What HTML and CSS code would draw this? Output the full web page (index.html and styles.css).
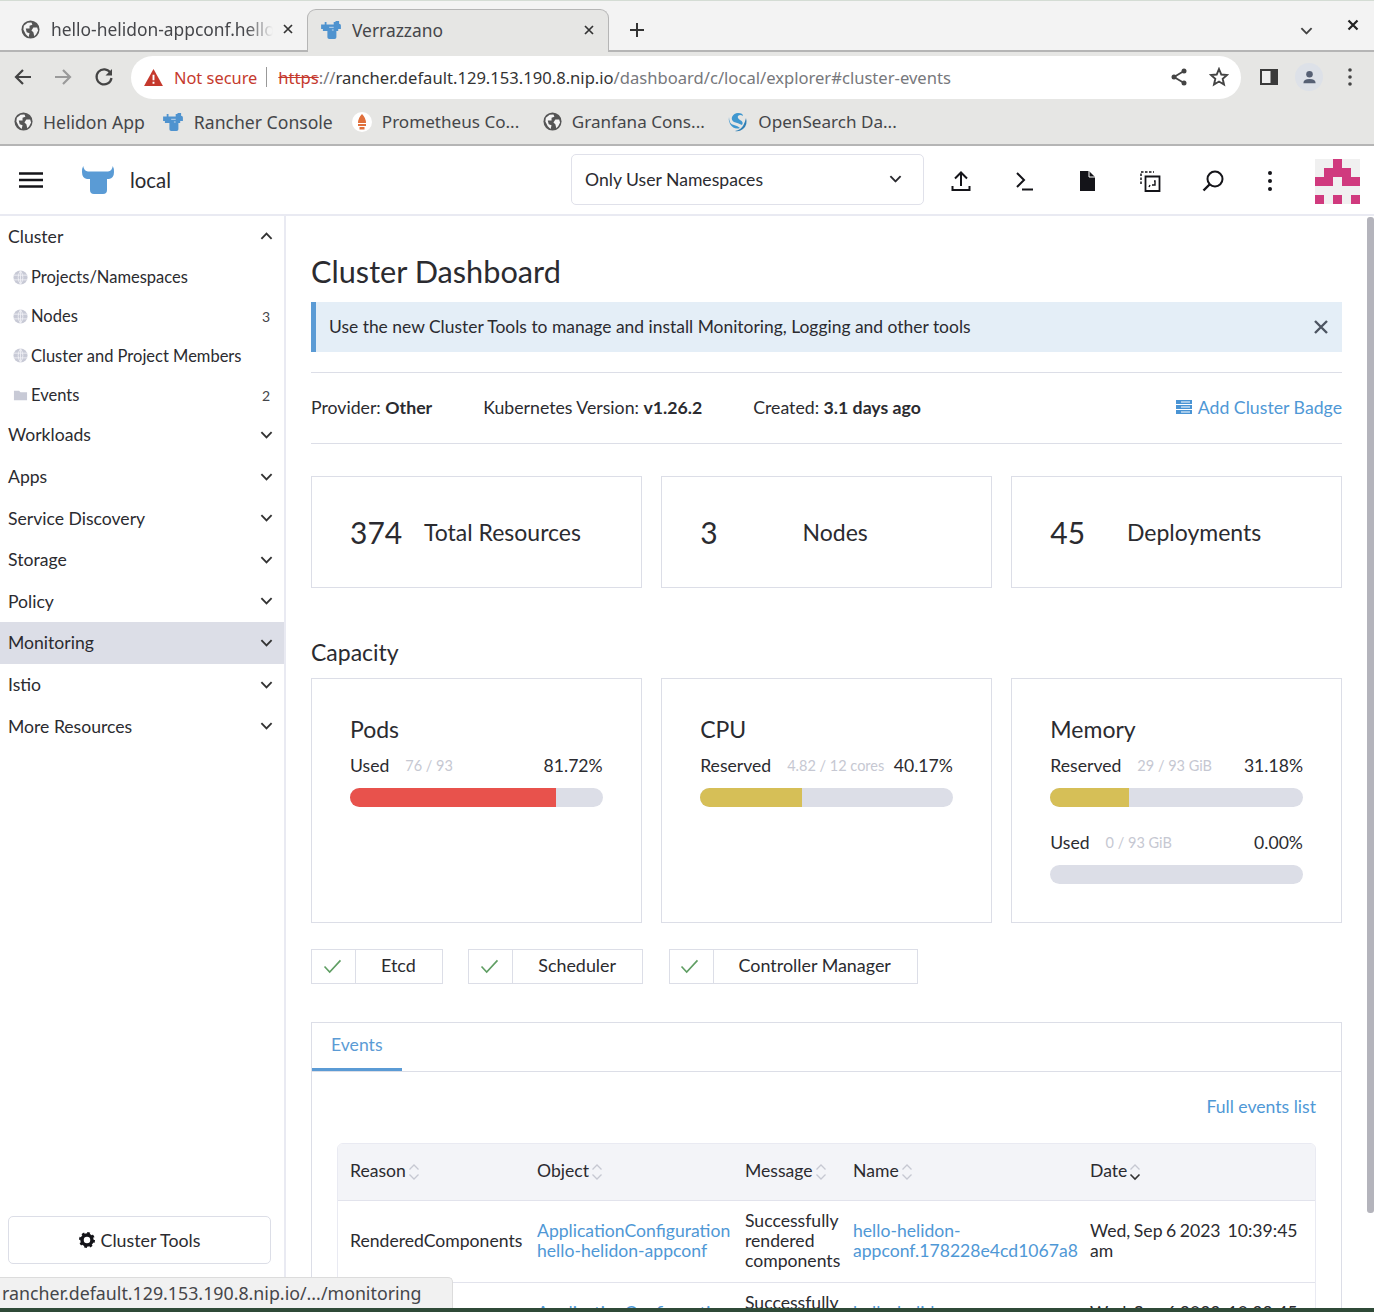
FILE: index.html
```html
<!DOCTYPE html>
<html lang="en">
<head>
  <meta charset="UTF-8" />
  <title>Verrazzano</title>
  <link rel="stylesheet" href="styles.css">
</head>
<body>
  <svg class="defs" width="0" height="0">
    <symbol id="bull" viewBox="0 0 32 28">
      <path d="M0 6 Q0 2 1.200 0 Q2 5 6 5.500 H26 Q30 5 30.800 0 Q32 2 32 6 Q32 12 27 13 H25 V24 Q25 28 21 28 H12 Q8 28 8 24 V13 H5 Q0 12 0 6Z" fill="#5a9bd5"/>
    </symbol>
    <symbol id="bull-small" viewBox="0 0 22 20">
      <path d="M0 4 H4 V1 H6 V4 H14 V1 H16 V0 H20 V3 Q22 3 22 5 V9 H19 V11 H17 V18 Q17 20 15 20 H9 Q7 20 7 18 V11 H2 V9 H0Z" fill="#4f93cf"/>
      <path d="M9 7 H14 M12 10 H14" stroke="#cfe0ef" stroke-width="1"/>
    </symbol>
    <symbol id="earth" viewBox="0 0 20 20">
      <circle cx="10" cy="10" r="9.500" fill="#555"/>
      <path d="M3 6 L7 3 L11 2.500 L12 5 L9 6 L9 9 L5 9 L6 13 L9 14 L8 18 L5 15 L2.500 10Z M13 8 H17 L18 11 L16 15 L14 17 L13 13 L11 11Z" fill="#f4f4f4"/>
    </symbol>
    <symbol id="small-globe" viewBox="0 0 16 16">
      <circle cx="8" cy="8" r="7.500" fill="#c8cad6"/>
      <path d="M0.500 5.500 H15.500 M0.500 10.500 H15.500 M8 0.500 V15.500 M8 0.500 Q3 8 8 15.500 M8 0.500 Q13 8 8 15.500" fill="none" stroke="#f1f1f6" stroke-width="0.900"/>
    </symbol>
    <symbol id="chev-down" viewBox="0 0 14 8">
      <path d="M1.500 1 L7 6.500 L12.500 1" fill="none" stroke="currentColor" stroke-width="2"/>
    </symbol>
    <symbol id="sort" viewBox="0 0 12 18">
      <path d="M1.500 6.500 L6 2 L10.500 6.500 M1.500 11.500 L6 16 L10.500 11.500" fill="none" stroke="#c6c8d2" stroke-width="1.300"/>
    </symbol>
    <symbol id="check" viewBox="0 0 20 16">
      <path d="M1.500 8 L7 14 L18.500 1.500" fill="none" stroke="#5f9e63" stroke-width="1.700"/>
    </symbol>
  </svg>

  <div class="tabstrip">
    <div class="tab">
      <svg class="tab-icon"><use href="#earth"/></svg>
      <span class="tab-title">hello-helidon-appconf.hello-helidon</span>
      <svg class="tab-close" viewBox="0 0 10 10"><path d="M1 1 L9 9 M9 1 L1 9" stroke="#333" stroke-width="1.700"/></svg>
    </div>
    <div class="tab tab-active">
      <svg class="tab-icon"><use href="#bull-small"/></svg>
      <span class="tab-title">Verrazzano</span>
      <svg class="tab-close" viewBox="0 0 10 10"><path d="M1 1 L9 9 M9 1 L1 9" stroke="#333" stroke-width="1.700"/></svg>
    </div>
    <svg class="new-tab" viewBox="0 0 16 16"><path d="M8 1 V15 M1 8 H15" stroke="#333" stroke-width="2"/></svg>
    <svg class="tab-list" viewBox="0 0 14 8"><use href="#chev-down"/></svg>
    <svg class="win-close" viewBox="0 0 12 12"><path d="M1.500 1.500 L10.500 10.500 M10.500 1.500 L1.500 10.500" stroke="#222" stroke-width="2.200"/></svg>
  </div>

  <div class="toolbar">
    <svg class="nav-icon nav-back" viewBox="0 0 20 20"><path d="M18 10 H3 M10 3 L3 10 L10 17" fill="none" stroke="#444" stroke-width="2.200"/></svg>
    <svg class="nav-icon nav-fwd" viewBox="0 0 20 20"><path d="M2 10 H17 M10 3 L17 10 L10 17" fill="none" stroke="#9a9a9a" stroke-width="2.200"/></svg>
    <svg class="nav-icon nav-reload" viewBox="0 0 20 20"><path d="M16.500 6 A7.500 7.500 0 1 0 17.500 11" fill="none" stroke="#444" stroke-width="2.200"/><path d="M18 2 V8.500 H11.500Z" fill="#444"/></svg>
    <div class="omnibox">
      <svg class="warn" viewBox="0 0 20 18"><path d="M10 0 L20 18 H0Z" fill="#c5392d"/><path d="M10 6 V12 M10 13.500 V15.500" stroke="#fff" stroke-width="2"/></svg>
      <span class="not-secure">Not secure</span>
      <span class="omni-sep"></span>
      <span class="url"><span class="url-https">https</span><span class="url-dim">://</span>rancher.default.129.153.190.8.nip.io<span class="url-dim">/dashboard/c/local/explorer#cluster-events</span></span>
      <svg class="omni-icon omni-share" viewBox="0 0 18 20"><path d="M14 4 L4 10 L14 16" fill="none" stroke="#444" stroke-width="1.800"/><circle cx="14" cy="4" r="2.500" fill="#444"/><circle cx="4" cy="10" r="2.500" fill="#444"/><circle cx="14" cy="16" r="2.500" fill="#444"/></svg>
      <svg class="omni-icon" viewBox="0 0 20 20"><path d="M10 2 L12.300 7.500 L18 8 L13.700 11.800 L15 17.500 L10 14.500 L5 17.500 L6.300 11.800 L2 8 L7.700 7.500Z" fill="none" stroke="#444" stroke-width="1.900"/></svg>
    </div>
    <svg class="side-panel" viewBox="0 0 18 16"><path d="M0 0 H18 V16 H0Z" fill="#3a3a3a"/><path d="M2 2 H10.500 V14 H2Z" fill="#eee"/></svg>
    <div class="profile">
      <svg viewBox="0 0 16 16"><circle cx="8" cy="4.500" r="3.500" fill="#566074"/><path d="M1.500 14 Q1.500 9.500 8 9.500 Q14.500 9.500 14.500 14Z" fill="#566074"/></svg>
    </div>
    <svg class="kebab-chrome" viewBox="0 0 4 18"><circle cx="2" cy="2" r="1.800" fill="#444"/><circle cx="2" cy="9" r="1.800" fill="#444"/><circle cx="2" cy="16" r="1.800" fill="#444"/></svg>
  </div>

  <div class="bookmarks">
    <span class="bookmark"><svg><use href="#earth"/></svg>Helidon App</span>
    <span class="bookmark"><svg class="bm-bull"><use href="#bull-small"/></svg>Rancher Console</span>
    <span class="bookmark bookmark-cut"><svg class="bm-wide" viewBox="0 0 20 20"><circle cx="10" cy="10" r="10" fill="#fff"/><path d="M10 2 Q14 6 14 11 H6 Q6 6 10 2Z M6 12 H14 V14 H6Z M7.500 15 H12.500 V17.500 H7.500Z" fill="#e0703c"/></svg>Prometheus Co...</span>
    <span class="bookmark bookmark-cut"><svg><use href="#earth"/></svg>Granfana Cons...</span>
    <span class="bookmark bookmark-cut"><svg class="bm-wide" viewBox="0 0 20 20"><path d="M10 1 Q15 1 15 4 Q12 2 10 4 Q9 6 12 8 Q16 10 14 13 Q10 11 6 10 Q3 8 4 5 Q6 1 10 1Z M1 5 Q1 12 6 13 Q10 14 12 16 Q6 18 2 12 Q0 8 1 5Z" fill="#3f97cf"/><path d="M18 6 Q20 13 15 17 Q11 20 7 19 Q13 18 15.500 13 Q17 10 18 6Z" fill="#2f7fb5"/></svg>OpenSearch Da...</span>
  </div>

  <header class="app-header">
    <svg class="burger" viewBox="0 0 24 16"><path d="M0 1.500 H24 M0 8 H24 M0 14.500 H24" stroke="#141419" stroke-width="2.400"/></svg>
    <svg class="app-logo"><use href="#bull"/></svg>
    <span class="cluster-name">local</span>
    <div class="ns-select">
      <span>Only User Namespaces</span>
      <svg viewBox="0 0 14 8"><use href="#chev-down"/></svg>
    </div>
    <div class="head-icon"><svg viewBox="0 0 20 22"><path d="M10 16 V3 M4 8.500 L10 2.500 L16 8.500 M1.500 16 V20 H18.500 V16" fill="none" stroke="#141419" stroke-width="2"/></svg></div>
    <div class="head-icon"><svg viewBox="0 0 20 22"><path d="M3 3 L10 10 L3 17 M8 19.500 H19" fill="none" stroke="#141419" stroke-width="2"/></svg></div>
    <div class="head-icon"><svg viewBox="0 0 20 22"><path d="M3 1 H12 L18 7 V21 H3Z" fill="#141419"/><path d="M12 1 V7 H18" fill="none" stroke="#fff" stroke-width="1"/></svg></div>
    <div class="head-icon"><svg viewBox="0 0 22 22"><path d="M2 14 V2 H15" fill="none" stroke="#141419" stroke-width="1.500" stroke-dasharray="2.500 1.500"/><path d="M6.500 6.500 H20.500 V21 H6.500Z" fill="none" stroke="#141419" stroke-width="1.800"/><path d="M11 15 L10 17 M15 11 H16 V15 H13" fill="none" stroke="#141419" stroke-width="1.400"/></svg></div>
    <div class="head-icon"><svg viewBox="0 0 22 22"><circle cx="13" cy="9" r="7.500" fill="none" stroke="#141419" stroke-width="2"/><path d="M7.500 14.500 L1.500 20.500" stroke="#141419" stroke-width="2.400"/></svg></div>
    <div class="head-icon head-kebab"><svg viewBox="0 0 4 22"><circle cx="2" cy="3" r="2" fill="#141419"/><circle cx="2" cy="11" r="2" fill="#141419"/><circle cx="2" cy="19" r="2" fill="#141419"/></svg></div>
    <svg class="avatar" viewBox="0 0 45 45">
      <rect width="45" height="45" fill="#f0f0f0"/>
      <path d="M18 0 H27 V9 H36 V18 H45 V27 H27 V18 H18 V27 H0 V18 H9 V9 H18Z M0 36 H9 V45 H0Z M18 36 H27 V45 H18Z M36 36 H45 V45 H36Z" fill="#d03a7e"/>
    </svg>
  </header>

  <div class="app-body">
    <nav class="sidebar">
      <div class="group group-first">Cluster<svg class="chev chev-up"><use href="#chev-down"/></svg></div>
      <a class="child"><svg><use href="#small-globe"/></svg>Projects/Namespaces</a>
      <a class="child"><svg><use href="#small-globe"/></svg>Nodes<span class="child-count">3</span></a>
      <a class="child"><svg><use href="#small-globe"/></svg>Cluster and Project Members</a>
      <a class="child"><svg viewBox="0 0 16 16"><path d="M1 3 H6.500 L8 4.500 H15 V13 H1Z" fill="#c8cad6"/></svg>Events<span class="child-count">2</span></a>
      <div class="group">Workloads<svg class="chev"><use href="#chev-down"/></svg></div>
      <div class="group">Apps<svg class="chev"><use href="#chev-down"/></svg></div>
      <div class="group">Service Discovery<svg class="chev"><use href="#chev-down"/></svg></div>
      <div class="group">Storage<svg class="chev"><use href="#chev-down"/></svg></div>
      <div class="group">Policy<svg class="chev"><use href="#chev-down"/></svg></div>
      <div class="group group-hover">Monitoring<svg class="chev"><use href="#chev-down"/></svg></div>
      <div class="group">Istio<svg class="chev"><use href="#chev-down"/></svg></div>
      <div class="group">More Resources<svg class="chev"><use href="#chev-down"/></svg></div>
      <button class="tools-btn">
        <svg viewBox="0 0 16 16"><circle cx="8" cy="8" r="5" fill="none" stroke="#141419" stroke-width="3.500"/><circle cx="8" cy="8" r="6.700" fill="none" stroke="#141419" stroke-width="2.600" stroke-dasharray="2.600 2.660"/></svg>
        Cluster Tools
      </button>
    </nav>

    <main class="main">
      <h1 class="page-title">Cluster Dashboard</h1>
      <div class="banner">
        <span>Use the new Cluster Tools to manage and install Monitoring, Logging and other tools</span>
        <svg viewBox="0 0 16 16"><path d="M2 2 L14 14 M14 2 L2 14" stroke="#4d5562" stroke-width="2.400"/></svg>
      </div>
      <div class="info-row">
        <span>Provider: <b>Other</b></span>
        <span>Kubernetes Version: <b>v1.26.2</b></span>
        <span>Created: <b>3.1 days ago</b></span>
        <a class="badge-link">
          <svg viewBox="0 0 16 16"><path d="M0 1 H16 V15 H0Z" fill="#4a94d4"/><path d="M0 5.500 H16 M0 10.500 H16 M5 3 H14 M5 8 H14 M5 13 H14" stroke="#fff" stroke-width="1"/></svg>
          Add Cluster Badge
        </a>
      </div>

      <div class="count-grid">
        <div class="count-card"><span class="count-num">374</span><span class="count-label">Total Resources</span></div>
        <div class="count-card"><span class="count-num">3</span><span class="count-label">Nodes</span></div>
        <div class="count-card"><span class="count-num">45</span><span class="count-label">Deployments</span></div>
      </div>

      <h2 class="section-title">Capacity</h2>
      <div class="capacity-grid">
        <div class="cap-card">
          <h3>Pods</h3>
          <div class="cap-line"><span>Used</span><span class="cap-amount">76 / 93</span><span class="cap-pct">81.72%</span></div>
          <div class="bar"><div class="bar-fill bar-red" style="width: 81.72%"></div></div>
        </div>
        <div class="cap-card">
          <h3>CPU</h3>
          <div class="cap-line"><span>Reserved</span><span class="cap-amount">4.82 / 12 cores</span><span class="cap-pct">40.17%</span></div>
          <div class="bar"><div class="bar-fill bar-yellow" style="width: 40.17%"></div></div>
        </div>
        <div class="cap-card">
          <h3>Memory</h3>
          <div class="cap-line"><span>Reserved</span><span class="cap-amount">29 / 93 GiB</span><span class="cap-pct">31.18%</span></div>
          <div class="bar"><div class="bar-fill bar-yellow" style="width: 31.18%"></div></div>
          <div class="cap-line cap-line-second"><span>Used</span><span class="cap-amount">0 / 93 GiB</span><span class="cap-pct">0.00%</span></div>
          <div class="bar"></div>
        </div>
      </div>

      <div class="status-row">
        <div class="status"><span class="status-check"><svg><use href="#check"/></svg></span><span class="status-label">Etcd</span></div>
        <div class="status"><span class="status-check"><svg><use href="#check"/></svg></span><span class="status-label">Scheduler</span></div>
        <div class="status"><span class="status-check"><svg><use href="#check"/></svg></span><span class="status-label">Controller Manager</span></div>
      </div>

      <section class="tabs-box">
        <div class="tabs-head"><span class="tabs-item">Events</span></div>
        <div class="tabs-body">
          <div class="full-list"><a>Full events list</a></div>
          <table class="events">
            <thead>
              <tr>
                <th class="col-reason">Reason<svg class="sort"><use href="#sort"/></svg></th>
                <th class="col-object">Object<svg class="sort"><use href="#sort"/></svg></th>
                <th class="col-message">Message<svg class="sort"><use href="#sort"/></svg></th>
                <th class="col-name">Name<svg class="sort"><use href="#sort"/></svg></th>
                <th class="col-date">Date<svg class="sort" viewBox="0 0 12 18"><path d="M1.500 6.500 L6 2 L10.500 6.500" fill="none" stroke="#c6c8d2" stroke-width="1.300"/><path d="M1.500 11.500 L6 16 L10.500 11.500" fill="none" stroke="#333" stroke-width="1.600"/></svg></th>
              </tr>
            </thead>
            <tbody>
              <tr>
                <td>RenderedComponents</td>
                <td><a>ApplicationConfiguration hello-helidon-appconf</a></td>
                <td>Successfully rendered components</td>
                <td><a>hello-helidon-appconf.178228e4cd1067a8</a></td>
                <td class="cell-date">Wed, Sep 6 2023&nbsp; 10:39:45 am</td>
              </tr>
              <tr>
                <td>RenderedComponents</td>
                <td><a>ApplicationConfiguration hello-helidon-appconf</a></td>
                <td>Successfully rendered components</td>
                <td><a>hello-helidon-appconf.178228e4cd1067a8</a></td>
                <td class="cell-date">Wed, Sep 6 2023&nbsp; 10:39:45 am</td>
              </tr>
            </tbody>
          </table>
        </div>
      </section>
    </main>

    <div class="scrollbar"><div class="scroll-thumb"></div></div>
  </div>

  <div class="status-bubble">rancher.default.129.153.190.8.nip.io/.../monitoring</div>
  <div class="desktop-strip"></div>
</body>
</html>
```

FILE: styles.css
```css
html, body {
  height: 100%;
}

body {
  margin: 0;
  width: 1374px;
  height: 1312px;
  overflow: hidden;
  display: flex;
  flex-direction: column;
  position: relative;
  font-family: Lato, "Liberation Sans", sans-serif;
  font-size: 17.600px;
  color: #2b2b30;
  background-color: #fff;
}

.defs {
  position: absolute;
}

a {
  color: #4f98d6;
}

/* browser chrome */
.tabstrip {
  height: 52px;
  flex: none;
  box-sizing: border-box;
  display: flex;
  align-items: flex-end;
  background-color: #f3f3f3;
  border-top: 1px solid #d4dcd4;
  border-bottom: 2px solid #b5b5b5;
  font-family: "Noto Sans", sans-serif;
  font-size: 17.400px;
  color: #45464a;
  position: relative;
}

.tab {
  width: 307px;
  height: 40px;
  box-sizing: border-box;
  display: flex;
  align-items: center;
  padding: 0 14px 2px 21px;
}

.tab-active {
  width: 302px;
  height: 43px;
  margin-bottom: -2px;
  padding: 0 14px 3px 13px;
  background-color: #e6e6e4;
  border: 1px solid #b5b5b5;
  border-bottom: none;
  border-radius: 9px 9px 0 0;
}

.tab-icon {
  width: 19px;
  height: 19px;
  flex: none;
  margin-right: 11px;
}

.tab-active .tab-icon {
  width: 20px;
  height: 18px;
  margin-right: 11px;
}

.tab-title {
  flex: 1;
  min-width: 0;
  white-space: nowrap;
  overflow: hidden;
}

.tab .tab-title {
  -webkit-mask-image: linear-gradient(to right, #000 88%, transparent 100%);
  mask-image: linear-gradient(to right, #000 88%, transparent 100%);
}

.tab-active .tab-title {
  -webkit-mask-image: none;
  mask-image: none;
}

.tab-close {
  width: 10px;
  height: 10px;
  flex: none;
  margin-left: 10px;
}

.new-tab {
  width: 16px;
  height: 16px;
  margin: 0 0 12px 20px;
}

.tab-list {
  width: 13px;
  height: 8px;
  margin: 0 0 15px auto;
  color: #444;
}

.win-close {
  width: 12px;
  height: 12px;
  margin: 0 15px 19px 34px;
}

.toolbar {
  height: 50px;
  flex: none;
  display: flex;
  align-items: center;
  background-color: #e6e6e4;
}

.nav-icon {
  width: 20px;
  height: 20px;
  flex: none;
}

.nav-back {
  margin-left: 13px;
}

.nav-fwd {
  margin-left: 20px;
}

.nav-reload {
  margin-left: 21px;
}

.omnibox {
  width: 1110px;
  height: 43px;
  flex: none;
  margin-left: 17px;
  box-sizing: border-box;
  display: flex;
  align-items: center;
  padding: 0 12px 0 13px;
  background-color: #fff;
  border-radius: 22px;
  font-family: "Noto Sans", sans-serif;
  font-size: 16.600px;
  color: #333;
}

.warn {
  width: 19px;
  height: 17px;
  flex: none;
}

.not-secure {
  margin-left: 11px;
  font-size: 16.400px;
  color: #c5392d;
}

.omni-sep {
  width: 1px;
  height: 20px;
  margin: 0 11px 0 9px;
  background-color: #999;
}

.url {
  flex: 1;
  white-space: nowrap;
}

.url-https {
  color: #c5392d;
  text-decoration: line-through;
}

.url-dim {
  color: #77787c;
}

.omni-icon {
  width: 20px;
  height: 20px;
  flex: none;
  margin-left: 20px;
}

.side-panel {
  width: 18px;
  height: 16px;
  flex: none;
  margin-left: 19px;
}

.profile {
  width: 28px;
  height: 28px;
  flex: none;
  margin-left: 17px;
  display: flex;
  align-items: center;
  justify-content: center;
  background-color: #dde1e8;
  border-radius: 50%;
}

.profile svg {
  width: 15px;
  height: 15px;
}

.kebab-chrome {
  width: 4px;
  height: 18px;
  flex: none;
  margin-left: 25px;
}

.bookmarks {
  height: 44px;
  flex: none;
  box-sizing: border-box;
  display: flex;
  align-items: center;
  gap: 19px;
  padding: 0 0 3px 14px;
  background-color: #e6e6e4;
  border-bottom: 2px solid #b5b5b5;
  font-family: "Noto Sans", sans-serif;
  font-size: 17.600px;
  color: #45464a;
}

.bookmark {
  display: flex;
  align-items: center;
  gap: 10px;
  white-space: nowrap;
}

.bookmark-cut {
  padding-right: 4.500px;
  font-size: 17.100px;
}

.bookmark svg {
  width: 19px;
  height: 19px;
  flex: none;
}

.bookmark .bm-bull {
  width: 22px;
  height: 18px;
  margin-left: -2px;
}

.bookmark .bm-wide {
  width: 20px;
  height: 20px;
}

/* app header */
.app-header {
  height: 70px;
  flex: none;
  box-sizing: border-box;
  display: flex;
  align-items: center;
  padding-left: 19px;
  background-color: #fff;
  border-bottom: 2px solid #e9eaf2;
}

.burger {
  width: 24px;
  height: 16px;
  flex: none;
}

.app-logo {
  width: 32px;
  height: 28px;
  flex: none;
  margin-left: 39px;
}

.cluster-name {
  width: 100px;
  margin-left: 16px;
  font-size: 20.400px;
}

.ns-select {
  width: 353px;
  height: 51px;
  flex: none;
  margin: 0 0 1px 341px;
  box-sizing: border-box;
  display: flex;
  align-items: center;
  justify-content: space-between;
  padding: 0 21px 1px 13px;
  border: 1px solid #e0e1ea;
  border-radius: 5px;
}

.ns-select svg {
  width: 13px;
  height: 8px;
}

.head-icon {
  width: 63px;
  height: 24px;
  flex: none;
  margin-top: 3px;
  display: flex;
  justify-content: center;
}

.ns-select + .head-icon {
  margin-left: 5px;
}

.head-icon svg {
  width: 22px;
  height: 22px;
}

.head-kebab {
  width: 51px;
}

.avatar {
  width: 45px;
  height: 45px;
  flex: none;
  margin: 2px 0 0 20px;
}

/* layout below the header */
.app-body {
  flex: 1;
  min-height: 0;
  display: flex;
}

.sidebar {
  width: 286px;
  flex: none;
  box-sizing: border-box;
  display: flex;
  flex-direction: column;
  border-right: 2px solid #e9eaf2;
}

.group {
  height: 41.600px;
  flex: none;
  display: flex;
  align-items: center;
  justify-content: space-between;
  padding: 0 11px 0 8px;
}

.group-first {
  height: 41px;
  padding-bottom: 1px;
  box-sizing: border-box;
}

.group-hover {
  background-color: #dcdee7;
}

.chev {
  width: 13px;
  height: 8px;
  color: #333;
}

.chev-up {
  transform: rotate(180deg);
}

.child {
  height: 39.300px;
  flex: none;
  box-sizing: border-box;
  display: flex;
  align-items: center;
  padding: 1px 14px 0 13px;
  color: #2b2b30;
  font-size: 16.500px;
}

.child svg {
  width: 15px;
  height: 15px;
  margin-right: 3px;
  flex: none;
}

.child-count {
  margin-left: auto;
  font-size: 14px;
  color: #45464a;
}

.tools-btn {
  height: 48px;
  flex: none;
  margin: auto 13px 44px 8px;
  display: flex;
  align-items: center;
  justify-content: center;
  gap: 6px;
  background-color: #fff;
  border: 1px solid #dcdee7;
  border-radius: 5px;
  font-family: inherit;
  font-size: 17.800px;
  color: #2b2b30;
}

.tools-btn svg {
  width: 16px;
  height: 16px;
}

.main {
  flex: 1;
  min-width: 0;
  box-sizing: border-box;
  padding: 0 25px;
  overflow: hidden;
}

.page-title {
  margin: 38px 0 12px;
  font-size: 30.700px;
  line-height: 36px;
  font-weight: 400;
}

.banner {
  height: 50px;
  box-sizing: border-box;
  display: flex;
  align-items: center;
  justify-content: space-between;
  padding: 0 13px 1px 13px;
  background-color: #e4eef7;
  border-left: 5px solid #5b9bd5;
  font-size: 17.450px;
}

.banner svg {
  width: 16px;
  height: 16px;
}

.info-row {
  height: 72px;
  margin-top: 20px;
  box-sizing: border-box;
  display: flex;
  align-items: center;
  gap: 51px;
  padding-bottom: 2px;
  border-top: 1px solid #dcdee7;
  border-bottom: 1px solid #dcdee7;
  font-size: 17.700px;
}

.badge-link {
  margin-left: auto;
  display: flex;
  align-items: center;
  gap: 6px;
}

.badge-link svg {
  width: 16px;
  height: 16px;
}

.count-grid,
.capacity-grid {
  display: grid;
  grid-template-columns: repeat(3, 1fr);
  gap: 19.500px;
}

.count-grid {
  margin-top: 32px;
}

.count-card {
  height: 112px;
  box-sizing: border-box;
  display: flex;
  align-items: center;
  padding: 0 38px;
  border: 1px solid #dcdee7;
}

.count-num {
  font-size: 30px;
}

.count-label {
  flex: 1;
  text-align: center;
  font-size: 23px;
}

.section-title {
  margin: 48px 0 9px;
  font-size: 23px;
  line-height: 33px;
  font-weight: 400;
}

.cap-card {
  height: 245px;
  box-sizing: border-box;
  padding: 34px 38px 0;
  border: 1px solid #dcdee7;
}

.cap-card h3 {
  margin: 0;
  font-size: 23px;
  line-height: 32px;
  font-weight: 400;
}

.cap-line {
  height: 24px;
  margin-top: 8px;
  display: flex;
  align-items: center;
}

.cap-line-second {
  margin-top: 23px;
}

.cap-amount {
  flex: 1;
  margin-left: 16px;
  font-size: 14.500px;
  color: #c6c8d2;
}

.bar {
  height: 19px;
  margin-top: 11px;
  background-color: #dcdee7;
  border-radius: 10px;
  overflow: hidden;
}

.bar-fill {
  height: 100%;
}

.bar-red {
  background-color: #e8524c;
}

.bar-yellow {
  background-color: #d6bf57;
}

.status-row {
  display: flex;
  gap: 25.500px;
  margin-top: 26px;
  font-size: 17.900px;
}

.status {
  height: 35px;
  box-sizing: border-box;
  display: flex;
  align-items: stretch;
  border: 1px solid #dcdee7;
}

.status-check {
  width: 43px;
  display: flex;
  align-items: center;
  justify-content: center;
  border-right: 1px solid #dcdee7;
}

.status-check svg {
  width: 19px;
  height: 15px;
  margin-right: 3px;
}

.status-label {
  display: flex;
  align-items: center;
  padding: 0 26px 3px 25px;
}

.tabs-box {
  margin-top: 38px;
  border: 1px solid #dcdee7;
}

.tabs-head {
  height: 49px;
  box-sizing: border-box;
  border-bottom: 1px solid #dcdee7;
}

.tabs-item {
  display: inline-flex;
  align-items: center;
  height: 48px;
  box-sizing: border-box;
  padding: 0 19px 3px;
  color: #5b9bd5;
  border-bottom: 3px solid #5b9bd5;
}

.tabs-body {
  padding: 0 25px;
}

.full-list {
  height: 71px;
  box-sizing: border-box;
  padding-bottom: 2px;
  display: flex;
  align-items: center;
  justify-content: flex-end;
}

.events {
  width: 100%;
  table-layout: fixed;
  border-collapse: separate;
  border-spacing: 0;
  border: 1px solid #e9eaf2;
  border-radius: 6px 6px 0 0;
}

.events th {
  height: 57px;
  box-sizing: border-box;
  padding: 0 0 4px 12px;
  text-align: left;
  font-weight: 400;
  background-color: #f3f4f8;
  border-bottom: 1px solid #e2e3ec;
}

.events th:first-child {
  border-top-left-radius: 5px;
}

.events th:last-child {
  border-top-right-radius: 5px;
}

.events td {
  height: 82px;
  box-sizing: border-box;
  padding: 0 0 1px 12px;
  line-height: 20px;
  border-bottom: 1px solid #e2e3ec;
}

.events .cell-date {
  word-spacing: -1px;
}

.col-reason {
  width: 187px;
}

.col-object {
  width: 208px;
}

.col-message {
  width: 108px;
}

.col-name {
  width: 237px;
}

.sort {
  width: 12px;
  height: 18px;
  vertical-align: -4px;
  margin-left: 2px;
}

.scrollbar {
  width: 7px;
  flex: none;
  background-color: #fff;
}

.scroll-thumb {
  height: 996px;
  margin-top: 1px;
  background-color: #b4b4bc;
  border-radius: 3px;
}

/* link preview over the page */
.status-bubble {
  position: absolute;
  left: 0;
  top: 1277px;
  width: 453px;
  height: 31px;
  box-sizing: border-box;
  padding-left: 2px;
  line-height: 30px;
  background-color: #f1f1f1;
  border-top: 1px solid #dcdcdc;
  border-right: 1px solid #dcdcdc;
  border-radius: 0 5px 0 0;
  font-family: "Noto Sans", sans-serif;
  font-size: 17.800px;
  color: #45464a;
  white-space: nowrap;
}

.desktop-strip {
  height: 4px;
  flex: none;
  background-color: #2f4a38;
}
```
